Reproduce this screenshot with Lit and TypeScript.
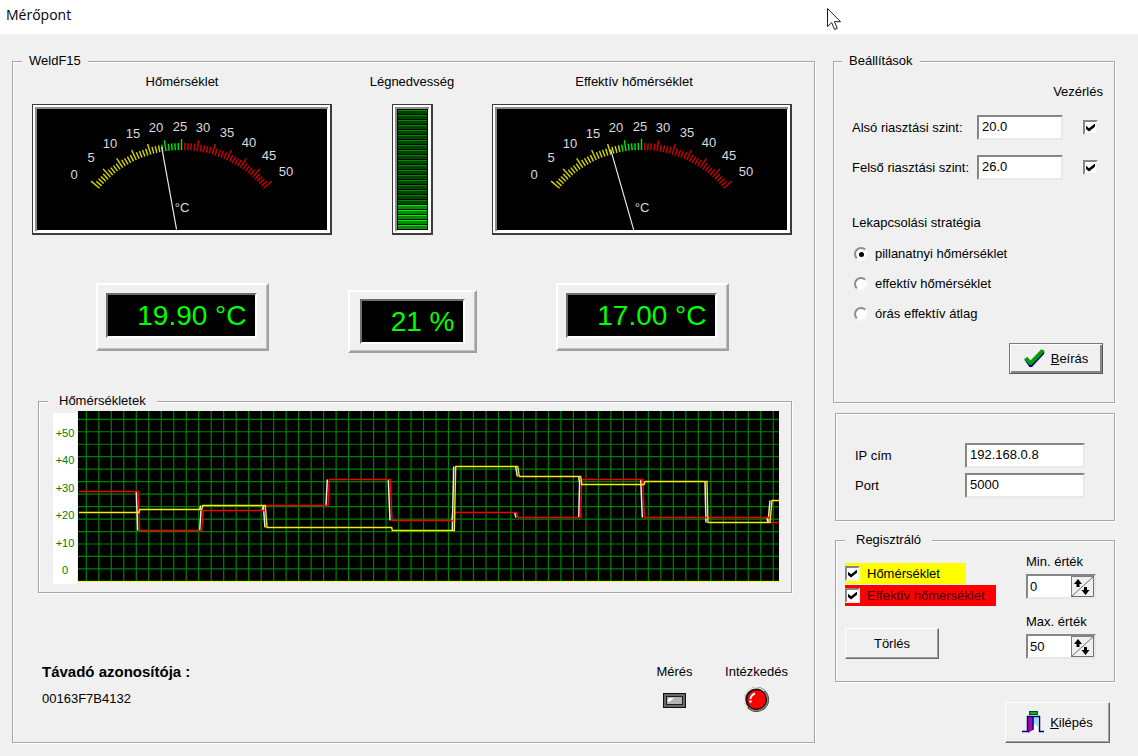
import { LitElement, html, svg, css } from "lit";
import { customElement, property, state } from "lit/decorators.js";

const UI_FONT = css`"Liberation Sans", Arial, sans-serif`;

/* Needle instrument with a coloured 0-50 scale */
@customElement("analog-gauge")
class AnalogGauge extends LitElement {
  @property({ type: Number }) value = 0;
  @property() label = "";

  static styles = css`
    :host { display: block; }
    svg { display: block; width: 100%; height: auto; }
    .num { font: 13px ${UI_FONT}; fill: #dcdcdc; text-anchor: middle; }
  `;

  private static numbers: [string, number, number][] = [
    ["0", 42, 75], ["5", 59, 58], ["10", 78, 44], ["15", 101, 34],
    ["20", 124, 28], ["25", 148, 27], ["30", 171, 28], ["35", 195, 33],
    ["40", 217, 43], ["45", 237, 56], ["50", 254, 72],
  ];

  private point(angle: number, radius: number) {
    const a = (angle * Math.PI) / 180;
    return [149.5 + Math.sin(a) * radius, 153 - Math.cos(a) * radius];
  }

  private tick(i: number) {
    const angle = -50 + (i * 100) / 60;
    const v = (i * 50) / 60;
    const color = v < 19.9 ? "#d8d800" : v <= 25 ? "#00e800" : "#d00000";
    const [x1, y1] = this.point(angle, 107);
    const [x2, y2] = this.point(angle, i % 5 === 0 ? 118 : 114);
    return svg`<line x1=${x1} y1=${y1} x2=${x2} y2=${y2} stroke=${color} stroke-width="1.4"/>`;
  }

  render() {
    const [nx, ny] = this.point((this.value - 25) * 2, 112);
    const [bx, by] = this.point((this.value - 25) * 2, 28);
    return html`
      <svg viewBox="0 0 300 131" role="img" aria-label="${this.label}: ${this.value} °C">
        <rect width="300" height="131" fill="#3c3c3c"/>
        <rect x="1" y="1" width="297" height="128" fill="#fff"/>
        <path d="M3 127V3H296V5H5V127Z" fill="#8c8c8c"/>
        <rect x="5" y="5" width="290" height="121" fill="#000"/>
        ${Array.from({ length: 61 }, (_, i) => this.tick(i))}
        <line x1=${bx} y1=${by} x2=${nx} y2=${ny} stroke="#e6e6e6" stroke-width="1.2"/>
        ${AnalogGauge.numbers.map(([t, x, y]) => svg`<text class="num" x=${x} y=${y}>${t}</text>`)}
        <text class="num" x="150" y="108">°C</text>
      </svg>`;
  }
}

/* Segmented vertical level bar */
@customElement("level-bar")
class LevelBar extends LitElement {
  @property({ type: Number }) value = 0;

  static styles = css`
    :host { display: block; }
    svg { display: block; }
  `;

  render() {
    const count = 24;
    const lit = Math.round((this.value / 100) * count);
    return html`
      <svg width="41" height="131" viewBox="0 0 41 131" role="img" aria-label="Légnedvesség: ${this.value} %">
        <rect width="41" height="131" fill="#3c3c3c"/>
        <rect x="1" y="1" width="38" height="128" fill="#fff"/>
        <path d="M3 127V3H37V5H5V127Z" fill="#8c8c8c"/>
        <rect x="5" y="5" width="31" height="121" fill="#000"/>
        ${Array.from({ length: count }, (_, i) => {
          const on = i >= count - lit;
          const y = 6 + i * 5;
          return svg`
            <rect x="6" y=${y} width="29" height="1" fill=${on ? "#00f000" : "#008a00"}/>
            <rect x="6" y=${y + 1} width="29" height="3" fill=${on ? "#008c00" : "#004600"}/>`;
        })}
      </svg>`;
  }
}

/* Green-on-black numeric readout in a raised frame */
@customElement("digital-readout")
class DigitalReadout extends LitElement {
  @property() value = "";

  static styles = css`
    :host {
      display: block;
      box-sizing: border-box;
      padding: 8px 10px 9px 8px;
      border: 2px solid;
      border-color: #fff #a0a0a0 #a0a0a0 #fff;
      box-shadow: inset -1px -1px 0 #c0c0c0;
    }
    .screen {
      display: block;
      border: 2px solid;
      border-color: #6e6e6e #fff #fff #6e6e6e;
      background: #000;
      color: #00ff00;
      font: 28px/41px ${UI_FONT};
      text-align: right;
      padding-right: 8px;
      white-space: nowrap;
    }
  `;

  render() {
    return html`<output class="screen">${this.value}</output>`;
  }
}

type Point = [number, number];

/* Step chart on a green grid */
@customElement("trend-chart")
class TrendChart extends LitElement {
  static styles = css`
    :host { display: flex; gap: 1px; align-items: flex-start; }
    .axis {
      flex: 0 0 24px;
      box-sizing: border-box;
      height: 171px;
      margin-top: 2px;
      padding: 13px 0 7px;
      background: #fff;
      color: #008000;
      font: 11px/14px ${UI_FONT};
      text-align: center;
      display: flex;
      flex-direction: column;
      justify-content: space-between;
    }
    .plot { display: block; flex: 1; min-width: 0; height: 171px; background: #000; }
  `;

  private effective: Point[] = [
    [1, 80.5], [60.3, 80.5], [61.7, 119.5], [123.7, 119.5], [125, 99.5], [186.3, 99.5], [187.7, 94.5],
    [250, 94.5], [251.3, 68.5], [312.3, 68.5], [314, 109.5], [376, 109.5], [376.7, 101.5],
    [438.7, 101.5], [440, 106.5], [502.7, 106.5], [503.7, 68.5], [564.7, 68.5], [566.3, 106.5],
    [691, 106.5], [692, 111.5], [701, 111.5],
  ];
  private current: Point[] = [
    [1, 101.5], [61, 101.5], [61.7, 98.5], [123.7, 98.5], [124.7, 94.5], [187.3, 94.5], [189, 116.5],
    [313.7, 116.5], [314.3, 119.5], [376.3, 119.5], [377.7, 55.5], [439.7, 55.5], [441.3, 65.5],
    [502.7, 65.5], [503.7, 73.5], [566, 73.5], [567, 70.5], [629, 70.5], [630, 111.5],
    [692, 111.5], [694, 89.5], [701, 89.5],
  ];

  private edges(points: Point[]) {
    let d = "";
    for (let i = 1; i < points.length; i++) {
      const [x1, y1] = points[i - 1];
      const [x2, y2] = points[i];
      if (Math.abs(y2 - y1) > 3) d += `M${x1 - 2} ${y1}L${x2 - 2} ${y2}`;
    }
    return d;
  }

  render() {
    let grid = "";
    for (let x = 8.3; x < 701; x += 12.49) grid += `M${x} 0V171`;
    for (let y = 8.3; y < 171; y += 12.47) grid += `M0 ${y}H701`;
    return html`
      <div class="axis">
        ${["+50", "+40", "+30", "+20", "+10", "0"].map((t) => html`<span>${t}</span>`)}
      </div>
      <svg class="plot" viewBox="0 0 701 171" preserveAspectRatio="none" role="img" aria-label="Hőmérsékletek">
        <g fill="none">
          <path d=${grid} stroke="#008000" stroke-width="1.2"/>
          <path d=${this.edges(this.effective) + this.edges(this.current)} stroke="#e8e8e8" stroke-width="1.5"/>
          <polyline points=${this.effective.join(" ")} stroke="#f00000" stroke-width="1.5"/>
          <polyline points=${this.current.join(" ")} stroke="#f0f000" stroke-width="1.4"/>
          <path d="M0 170.5H701" stroke="#ff0"/>
        </g>
      </svg>`;
  }
}

@customElement("app-root")
class AppRoot extends LitElement {
  @state() private min = 0;
  @state() private max = 50;

  static styles = css`
    :host {
      display: flex;
      flex-direction: column;
      min-height: 100vh;
      background: #f0f0f0;
      color: #000;
      font: 13px/16px ${UI_FONT};
    }
    .titlebar {
      display: flex;
      align-items: center;
      height: 34px;
      padding: 0 6px 4px;
      box-sizing: border-box;
      background: #fff;
    }
    .titlebar h1 { margin: 0; font: 14px/20px "Open Sans", "Noto Sans", sans-serif; }
    .cursor { position: absolute; left: 826px; top: 7px; }
    .content {
      flex: 1;
      display: grid;
      grid-template-columns: minmax(0, 1fr) 282px;
      gap: 18px;
      padding: 19px 23px 13px 12px;
    }
    .group {
      margin: 0;
      min-width: 0;
      border: 1px solid #a6a6a6;
      box-shadow: 1px 1px 0 #fff, inset 1px 1px 0 #fff;
      padding: 0;
    }
    .group > legend { background: #f0f0f0; padding: 0 7px; margin-left: -10px; }
    .station { padding: 5px 22px 0 19px; }

    .meters {
      display: grid;
      grid-template-columns: 300px minmax(0, 1fr) 300px;
      justify-items: center;
      row-gap: 14px;
    }
    .meters analog-gauge { width: 100%; }
    .effective-caption { padding-right: 16px; }
    .readouts {
      display: grid;
      grid-template-columns: 300px minmax(0, 1fr) 300px;
      justify-items: center;
      margin-top: 48px;
      height: 70px;
    }
    .readouts digital-readout { width: 173px; align-self: start; padding-bottom: 11px; }
    .readouts .narrow { width: 129px; align-self: end; padding: 7px 10px; }
    .trend { margin: 40px 0 0 6px; padding: 2px 12px 8px 14px; }
    .trend > legend { padding: 0 11px; margin-left: -5px; }

    .footer { display: flex; gap: 11px; margin-top: 71px; }
    .ident { flex: 1; margin: 0; padding-left: 10px; }
    .ident dt { font-weight: bold; font-size: 15px; }
    .ident dd { margin: 11px 0 0; }
    .lamp { width: 71px; display: flex; flex-direction: column; align-items: center; white-space: nowrap; }
    .lamp svg { display: block; margin-top: 6px; }

    .side { display: flex; flex-direction: column; align-items: flex-start; }
    .settings { align-self: stretch; padding: 15px 11px 28px 18px; }
    .control-head { text-align: right; }
    .limit {
      display: grid;
      grid-template-columns: 125px 86px 1fr;
      align-items: center;
      justify-items: start;
      margin: 15px 5px 0 0;
    }
    .limit .tick { justify-self: end; }
    .limit label { white-space: nowrap; }
    .strategy { margin-top: 35px; }
    .strategy p { margin: 0 0 8px; }
    .strategy label { display: flex; align-items: center; gap: 7px; padding-left: 2px; height: 30px; }
    .settings-actions { display: flex; justify-content: flex-end; margin-top: 14px; }

    .field {
      appearance: none;
      box-sizing: border-box;
      height: 25px;
      width: 100%;
      margin: 0;
      padding: 0 3px 2px;
      background: #fff;
      border: 2px solid;
      border-color: #868686 #e8e8e8 #e8e8e8 #868686;
      border-radius: 0;
      font: inherit;
      color: #000;
      outline: none;
    }
    .tick {
      appearance: none;
      flex: none;
      box-sizing: border-box;
      width: 15px;
      height: 15px;
      margin: 0;
      background: #fff;
      border: 2px solid;
      border-color: #868686 #f0f0f0 #f0f0f0 #868686;
      display: grid;
      place-items: center;
    }
    .tick:checked::after {
      content: "";
      width: 9px;
      height: 8px;
      background: #000;
      clip-path: polygon(0 28%, 34% 58%, 100% 0, 100% 42%, 34% 100%, 0 70%);
    }
    .radio {
      appearance: none;
      box-sizing: border-box;
      width: 14px;
      height: 14px;
      margin: 0;
      background: #fff;
      border: 2px solid;
      border-color: #8c8c8c #f8f8f8 #f8f8f8 #8c8c8c;
      border-radius: 50%;
      display: grid;
      place-items: center;
    }
    .radio:checked::after { content: ""; width: 5px; height: 5px; border-radius: 50%; background: #000; }

    .btn {
      display: flex;
      align-items: center;
      justify-content: center;
      gap: 6px;
      box-sizing: border-box;
      width: 94px;
      height: 31px;
      padding: 0;
      border: 1px solid;
      border-color: #fff #696969 #696969 #fff;
      box-shadow: inset -1px -1px 0 #a0a0a0;
      border-radius: 0;
      background: #f0f0f0;
      color: #000;
      font: inherit;
    }
    .btn.primary {
      border-color: #7a7a7a #5a5a5a #5a5a5a #7a7a7a;
      box-shadow: inset 1px 1px 0 #fff, inset -2px -2px 0 #868686;
    }
    .btn.large { width: 105px; height: 41px; }

    .network {
      align-self: stretch;
      margin: 10px 0 0 2px;
      padding: 29px 29px 22px 19px;
      display: grid;
      grid-template-columns: 110px 1fr;
      row-gap: 5px;
      align-items: center;
    }
    .recorder {
      align-self: stretch;
      margin: 11px 0 0 2px;
      padding: 6px 18px 22px 9px;
    }
    .recorder > legend { padding: 0 11px; margin-left: 0; }
    .recorder-body { display: flex; justify-content: space-between; align-items: flex-start; }
    .series { display: flex; flex-direction: column; align-items: flex-start; margin-top: 9px; }
    .swatch { display: flex; align-items: center; gap: 7px; height: 21px; width: 121px; white-space: nowrap; box-sizing: border-box; }
    .yellow { background: #ff0; }
    .red { background: #f00; width: 151px; color: #400000; margin-top: 1px; }
    .series .btn { margin-top: 22px; }
    .ranges { width: 70px; }
    .range label { display: block; margin-bottom: 4px; white-space: nowrap; }
    .range + .range { margin-top: 15px; }
    .spin {
      display: flex;
      box-sizing: border-box;
      height: 25px;
      border: 2px solid;
      border-color: #868686 #e8e8e8 #e8e8e8 #868686;
      background: #fff;
    }
    .spin .field { flex: 1; min-width: 0; width: 0; height: 21px; border: 0; padding: 0 2px; }
    .spin button { flex: none; width: 23px; padding: 0; border: 0; background: #f0f0f0; display: block; }
    .spin svg { display: block; }
    .exit { align-self: flex-end; margin: 20px 5px 0 0; }
  `;

  private range(id: string, label: string, value: number) {
    return html`
      <div class="range">
        <label for=${id}>${label}</label>
        <div class="spin">
          <input class="field" id=${id} .value=${String(value)}>
          <button type="button" aria-label="${label} léptetése" @click=${(e: MouseEvent) => this.step(id, e)}>
            <svg width="23" height="21" viewBox="0 0 23 21">
              <path d="M0 21V0H23" fill="none" stroke="#808080" stroke-width="2"/>
              <path d="M0 20.5H22.5V0" fill="none" stroke="#707070"/>
              <path d="M1 20L22 1" stroke="#707070"/>
              <path d="M3 8L7 3L11 8H8.500V11H5.500V8Z M10.500 14L14.500 19L18.500 14H16V11H13V14Z" fill="#000"/>
            </svg>
          </button>
        </div>
      </div>`;
  }

  private step(id: string, e: MouseEvent) {
    const box = (e.currentTarget as HTMLElement).getBoundingClientRect();
    const up = (e.clientX - box.left) / box.width + (e.clientY - box.top) / box.height < 1;
    if (id === "min") this.min += up ? 1 : -1;
    else this.max += up ? 1 : -1;
  }

  render() {
    return html`
      <header class="titlebar"><h1>Mérőpont</h1></header>
      <svg class="cursor" width="16" height="24" viewBox="0 0 16 24" aria-hidden="true">
        <path d="M1.500 1.500V19.500L5.700 15.600L8.600 22.500L11.300 21.300L8.400 14.700H14.500Z" fill="#fff" stroke="#1a1a2a"/>
      </svg>
      <main class="content">
        <fieldset class="group station">
          <legend>WeldF15</legend>
          <div class="meters">
            <span>Hőmérséklet</span>
            <span>Légnedvesség</span>
            <span class="effective-caption">Effektív hőmérséklet</span>
            <analog-gauge label="Hőmérséklet" .value=${19.9}></analog-gauge>
            <level-bar .value=${21}></level-bar>
            <analog-gauge label="Effektív hőmérséklet" .value=${17}></analog-gauge>
          </div>
          <div class="readouts">
            <digital-readout value="19.90 °C"></digital-readout>
            <digital-readout class="narrow" value="21 %"></digital-readout>
            <digital-readout value="17.00 °C"></digital-readout>
          </div>
          <fieldset class="group trend">
            <legend>Hőmérsékletek</legend>
            <trend-chart></trend-chart>
          </fieldset>
          <div class="footer">
            <dl class="ident">
              <dt>Távadó azonosítója :</dt>
              <dd>00163F7B4132</dd>
            </dl>
            <div class="lamp">
              <span>Mérés</span>
              <svg width="23" height="27" viewBox="0 0 23 27" aria-hidden="true">
                <rect y="7" width="23" height="15" fill="#101010"/>
                <rect x="1" y="8" width="21" height="13" fill="#686868"/>
                <rect x="3" y="10" width="17" height="9" fill="#202020"/>
                <rect x="4" y="11" width="15" height="7" fill="#b4b4b4"/>
                <path d="M5 16V13L7 12H11L6 16Z" fill="#fff"/>
              </svg>
            </div>
            <div class="lamp">
              <span>Intézkedés</span>
              <svg width="27" height="27" viewBox="0 0 27 27" aria-hidden="true">
                <circle cx="13.500" cy="13.500" r="12.500" fill="#202020"/>
                <path d="M4.800 21.500A11.300 11.300 0 0 1 21.500 5.300" fill="none" stroke="#e8e8e8" stroke-width="1.500"/>
                <path d="M5.500 21.500A11.300 11.300 0 0 0 21.500 5.500" fill="none" stroke="#808080" stroke-width="1.500"/>
                <circle cx="13.500" cy="13.500" r="9.700" fill="#f00" stroke="#200" />
                <path d="M7.500 13Q8 9 12 7.500" fill="none" stroke="#fff" stroke-width="2"/>
                <circle cx="7.500" cy="15.500" r="1.200" fill="#fff"/>
              </svg>
            </div>
          </div>
        </fieldset>

        <div class="side">
          <fieldset class="group settings">
            <legend>Beállítások</legend>
            <div class="control-head">Vezérlés</div>
            <div class="limit">
              <label for="low">Alsó riasztási szint:</label>
              <input class="field" id="low" value="20.0">
              <input class="tick" type="checkbox" checked aria-label="Vezérlés, alsó riasztási szint">
            </div>
            <div class="limit">
              <label for="high">Felső riasztási szint:</label>
              <input class="field" id="high" value="26.0">
              <input class="tick" type="checkbox" checked aria-label="Vezérlés, felső riasztási szint">
            </div>
            <div class="strategy" role="radiogroup" aria-labelledby="strategy-title">
              <p id="strategy-title">Lekapcsolási stratégia</p>
              <label><input class="radio" type="radio" name="strategy" checked>pillanatnyi hőmérséklet</label>
              <label><input class="radio" type="radio" name="strategy">effektív hőmérséklet</label>
              <label><input class="radio" type="radio" name="strategy">órás effektív átlag</label>
            </div>
            <div class="settings-actions">
              <button class="btn primary" type="button">
                <svg width="21" height="19" viewBox="0 0 21 19" aria-hidden="true">
                  <path d="M0.500 11L3.500 9L6.500 12.500L17.500 1.500L20.500 2.500L20 5L8 18L5.500 18Z" fill="#000080"/>
                  <path d="M0 10L3.500 8L6.500 11.500L17 0.500L20 1V3L7.500 16H5.500Z" fill="#00a000"/>
                </svg>
                <span><u>B</u>eírás</span>
              </button>
            </div>
          </fieldset>

          <section class="group network" aria-label="Hálózat">
            <label for="ip">IP cím</label>
            <input class="field" id="ip" value="192.168.0.8">
            <label for="port">Port</label>
            <input class="field" id="port" value="5000">
          </section>

          <fieldset class="group recorder">
            <legend>Regisztráló</legend>
            <div class="recorder-body">
              <div class="series">
                <label class="swatch yellow"><input class="tick" type="checkbox" checked>Hőmérséklet</label>
                <label class="swatch red"><input class="tick" type="checkbox" checked>Effektív hőmérséklet</label>
                <button class="btn" type="button">Törlés</button>
              </div>
              <div class="ranges">
                ${this.range("min", "Min. érték", this.min)}
                ${this.range("max", "Max. érték", this.max)}
              </div>
            </div>
          </fieldset>

          <button class="btn large exit" type="button">
            <svg width="22" height="23" viewBox="0 0 22 23" aria-hidden="true">
              <rect x="7" y="0" width="9" height="4" fill="#00501a"/>
              <rect x="8" y="1" width="7" height="2" fill="#00b030"/>
              <rect x="5" y="5" width="13" height="16" fill="#fff"/>
              <path d="M11 6H16V16L13 12L11 18Z" fill="#7fe8f0"/>
              <path d="M6 6H11V19L6 22Z" fill="#b000b0"/>
              <path d="M0 20.500H5.500V5.500H17.500V20.500H22M11 6V19" fill="none" stroke="#000080" stroke-width="1.500"/>
            </svg>
            <span><u>K</u>ilépés</span>
          </button>
        </div>
      </main>
    `;
  }
}
